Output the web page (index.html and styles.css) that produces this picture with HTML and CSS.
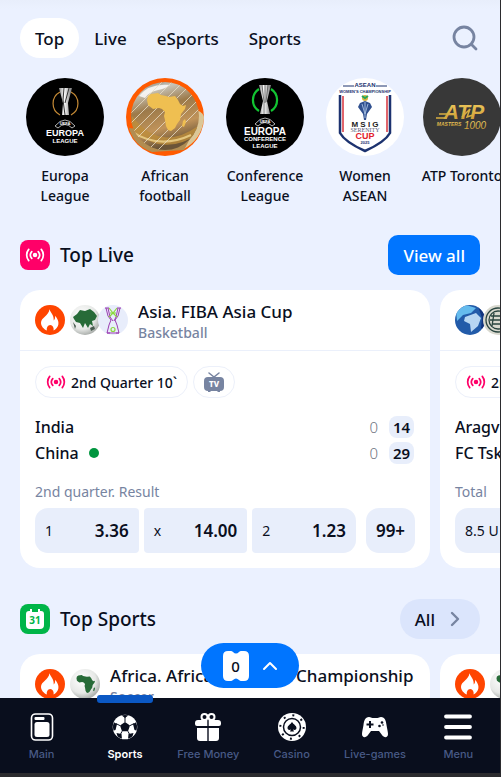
FILE: index.html
```html
<!DOCTYPE html>
<html lang="en">

<head>
  <meta charset="UTF-8" />
  <meta name="viewport" content="width=device-width, initial-scale=1" />
  <title>Sports</title>
  <link rel="stylesheet" href="styles.css">
</head>

<body>
  <!-- shared icons -->
  <svg class="sprite" aria-hidden="true">
    <symbol id="live" viewBox="0 0 22 20">
      <circle cx="11" cy="10" r="2.5" fill="currentColor" />
      <g fill="none" stroke="currentColor" stroke-width="1.9" stroke-linecap="round">
        <path d="M7.4 6.2c-1.9 2.2-1.9 5.4 0 7.6M14.6 6.2c1.9 2.2 1.9 5.4 0 7.6" />
        <path d="M4 3.8c-3 3.6-3 8.8 0 12.4M18 3.8c3 3.6 3 8.8 0 12.4" />
      </g>
    </symbol>
    <symbol id="flame" viewBox="0 0 30 30">
      <circle cx="15" cy="15" r="15" fill="#ff4500" />
      <path fill="#fff" d="M14.4 4.2C16 8 19.2 10.6 18.7 15.6C20 14.5 20.3 12.500 20 10.800C22.500 13.500 23.800 16.500 23.400 19.200C23 22 20.800 24.400 18.600 25.600C19 22.500 17.800 20.200 15.200 20C12.600 20.200 11.400 22.500 11.800 25.600C8.700 24.200 6 21.200 6 17.800C6 12.500 14 10.500 14.400 4.200Z" />
    </symbol>
    <symbol id="africa" viewBox="20 13 42 42">
      <path fill="currentColor" d="M22 18l3-2 7-1 3 2 5 1 3 1 6-1 3 4 2 4 3 2 3-1-1 4-4 5-1 6-3 4-2 4-4 3-3-1-2-4-1-6-1-4 1-4-3-3-3-1-6 1-5-4-1-5zM57 43l2-2 1 3-2 5-2-1z" />
    </symbol>
    <symbol id="africa-globe" viewBox="0 0 30 30">
      <circle cx="15" cy="15" r="15" fill="url(#globe)" />
      <use href="#africa" x="6" y="5" width="20" height="20" color="#276b38" />
    </symbol>
    <defs>
      <radialGradient id="globe" cx=".4" cy=".35" r=".65">
        <stop offset="0" stop-color="#fff" />
        <stop offset=".7" stop-color="#e6e8e6" />
        <stop offset="1" stop-color="#aeb2af" />
      </radialGradient>
      <linearGradient id="gold" x2="0" y2="1">
        <stop offset="0" stop-color="#f3cf62" />
        <stop offset="1" stop-color="#c79630" />
      </linearGradient>
      <linearGradient id="glass" x2=".3" y2="1">
        <stop offset="0" stop-color="#77736a" />
        <stop offset=".2" stop-color="#c8c4b8" />
        <stop offset=".45" stop-color="#9c7a4a" />
        <stop offset=".75" stop-color="#c0935a" />
        <stop offset="1" stop-color="#6b5538" />
      </linearGradient>
      <linearGradient id="silver">
        <stop offset="0" stop-color="#8a8a8a" />
        <stop offset=".4" stop-color="#fff" />
        <stop offset="1" stop-color="#777" />
      </linearGradient>
      <clipPath id="ball"><circle cx="39" cy="38" r="34" /></clipPath>
      <clipPath id="disc"><circle cx="15" cy="15" r="15" /></clipPath>
      <clipPath id="soccer"><circle cx="14" cy="14" r="12" /></clipPath>
    </defs>
  </svg>

  <div class="app">
    <main class="content">
      <nav class="tabs" aria-label="Sections">
        <button class="tab active">Top</button>
        <button class="tab">Live</button>
        <button class="tab">eSports</button>
        <button class="tab">Sports</button>
        <button class="search" aria-label="Search">
          <svg viewBox="0 0 28 26" width="28" height="26">
            <g fill="none" stroke="#7784a1" stroke-width="2.800" stroke-linecap="round">
              <circle cx="12" cy="12" r="10" />
              <path d="M19.500 19.500l4.500 4.500" />
            </g>
          </svg>
        </button>
      </nav>

      <div class="leagues">
        <a class="league" href="#">
          <svg viewBox="0 0 78 78">
            <circle cx="39" cy="39" r="39" fill="#000" />
            <path d="M34 14a13 13 0 0 0 0 23M45 14a13 13 0 0 1 0 23" fill="none" stroke="#c58a35" stroke-width="1.200" />
            <path d="M33 10h13l-4 15 1 12h-7l1-12z" fill="url(#silver)" />
            <path d="M38 10l-1 12 2 15M43 10l-4 15" stroke="#333" fill="none" />
            <path d="M29 48q10-12 20 0l-3 2q-7-7-14 0z" fill="none" stroke="#ddd" stroke-width=".8" />
            <text x="39" y="47" class="logo-text" font-size="4">UEFA</text>
            <text x="39" y="58" class="logo-text" font-size="9">EUROPA</text>
            <text x="39" y="65" class="logo-text" font-size="6">LEAGUE</text>
          </svg>
          <span>Europa League</span>
        </a>
        <a class="league" href="#">
          <svg viewBox="0 0 78 78">
            <circle cx="39" cy="39" r="39" fill="#ff5a00" />
            <path d="M71 32q7 3 7 8-2 22-22 32l-9-3q20-10 24-37z" fill="#dbc797" />
            <path d="M3 50q5 18 23 24l32-2 8-15z" fill="#b28d51" />
            <circle cx="39" cy="38" r="34" fill="url(#glass)" />
            <g clip-path="url(#ball)">
              <path d="M6 38q28 37 66 10v8q-35 24-66-5z" fill="#bd8d3b" opacity=".8" />
              <path d="M5 53q28 19 60 4" fill="none" stroke="#e4c67d" stroke-width="2" />
              <path d="M13 18q10-13 31-11-5 4-12 5-9 2-13 8z" fill="#fff" opacity=".8" />
              <path d="M-8 48L43-3M-2 52L49 1M4 57L57 4M10 61L64 7M16 67L70 13M22 72L73 21M30 74L77 27" stroke="#e9ddc6" stroke-width=".8" />
            </g>
            <use href="#africa" x="20" y="13" width="42" height="42" color="#efbf51" />
          </svg>
          <span>African football</span>
        </a>
        <a class="league" href="#">
          <svg viewBox="0 0 78 78">
            <circle cx="39" cy="39" r="39" fill="#000" />
            <path d="M33 11a13 13 0 0 0 0 22M45 11a13 13 0 0 1 0 22" fill="none" stroke="#12c432" stroke-width="2.200" />
            <path d="M33 7h12l-4 16 3 13H34l3-13z" fill="url(#silver)" />
            <path d="M36 7l2 17v12M42 7l-2 17M39 7v18" stroke="#444" stroke-width=".7" fill="none" />
            <path d="M29 46q10-12 20 0l-3 2q-7-7-14 0z" fill="none" stroke="#ddd" stroke-width=".8" />
            <text x="39" y="45" class="logo-text" font-size="4">UEFA</text>
            <text x="39" y="57" class="logo-text" font-size="10">EUROPA</text>
            <text x="39" y="63" class="logo-text" font-size="6">CONFERENCE</text>
            <text x="39" y="70" class="logo-text" font-size="6">LEAGUE</text>
          </svg>
          <span>Conference League</span>
        </a>
        <a class="league" href="#">
          <svg viewBox="0 0 78 78">
            <circle cx="39" cy="39" r="39" fill="#fff" />
            <path d="M14 17v38q5 9 25 18 20-9 25-18V17" fill="none" stroke="#1c326f" stroke-width="2.500" />
            <path d="M17 18v36M61 18v36" stroke="#d8353d" stroke-width="1.500" />
            <path d="M17 8h11M50 8h11" stroke="#1c326f" />
            <text x="39" y="9" class="logo-text navy" font-size="6">ASEAN</text>
            <text x="39" y="15" class="logo-text navy" font-size="4">WOMEN'S CHAMPIONSHIP</text>
            <circle cx="39" cy="20" r="3" fill="#d8b442" />
            <path d="M36 18l3 2 3-2" stroke="#27a65a" stroke-width="2" fill="none" />
            <path d="M34 25l5-2 5 2 2 4-5 7-1 6h-2l-1-6-5-7z" fill="#30508f" />
            <path d="M36 26l3 10 3-10M39 24v16" stroke="#9db7dd" fill="none" />
            <text x="39" y="49" class="logo-text dark" font-size="8">M S I G</text>
            <text x="39" y="54" class="logo-serif" font-size="6">SERENITY</text>
            <text x="39" y="61" class="logo-text red" font-size="9">CUP</text>
            <text x="39" y="66" class="logo-text navy" font-size="4">2025</text>
          </svg>
          <span>Women ASEAN</span>
        </a>
        <a class="league league-wide" href="#">
          <svg viewBox="0 0 78 78">
            <circle cx="39" cy="39" r="39" fill="#383838" />
            <text x="41" y="41" class="logo-gold" font-size="21">ATP</text>
            <path d="M13 40h11M16 36h9M39 39l8-8-3 8 6-2" stroke="#d8ae42" stroke-width="1.500" fill="none" />
            <text x="26" y="48" class="logo-gold" font-size="5">MASTERS</text>
            <text x="52" y="51" class="logo-gold thin" font-size="10">1000</text>
          </svg>
          <span>ATP Toronto</span>
        </a>
      </div>

      <section class="section">
        <header class="section-header">
          <span class="section-icon pink"><svg viewBox="0 0 22 20" width="20" height="18"><use href="#live" /></svg></span>
          <h2>Top Live</h2>
          <button class="view-all">View all</button>
        </header>

        <div class="cards">
          <article class="card">
            <div class="card-header">
              <div class="badges">
                <svg viewBox="0 0 30 30"><use href="#flame" /></svg>
                <svg viewBox="0 0 30 30">
                  <circle cx="15" cy="15" r="15" fill="url(#globe)" />
                  <path fill="#276b38" d="M3 12l4-3 3-4 5 1 5-2 4 3 3 4-2 4-3 1 1 5-3-2-2 4-3-5-2 5-3-5-4-1-2-3z" />
                  <path fill="#4a5c51" d="M20 23l4-2 1 3-4 2zM3 17l3 4-1 3z" />
                </svg>
                <svg class="overlap" viewBox="0 0 30 30">
                  <circle cx="15" cy="15" r="15" fill="#e8edfb" />
                  <g fill="none" stroke="#9b3db1">
                    <path d="M7 3h4M19 3h4M8 3l2 8 3 4-2 5-2 8h3M22 3l-2 8-3 4 2 5 2 8h-3M10 3l2 9 3 4M20 3l-2 9-2 4M9 28h12" />
                  </g>
                  <g fill="none" stroke="#8cd83e" stroke-width="1.200">
                    <path d="M11 3l4 5 4-5M11 12l4-4 4 4M12 8h6" />
                    <circle cx="15" cy="24.500" r="2" />
                  </g>
                </svg>
              </div>
              <div class="titles">
                <h3>Asia. FIBA Asia Cup</h3>
                <p>Basketball</p>
              </div>
            </div>
            <div class="card-body">
              <div class="tags">
                <span class="tag live-tag"><svg viewBox="0 0 22 20" width="20" height="18"><use href="#live" /></svg>2nd Quarter 10`</span>
                <span class="tag">
                  <svg viewBox="0 0 20 20" width="20" height="20">
                    <path d="M5 1l5 4 5-4" fill="none" stroke="#7784a1" stroke-width="1.500" stroke-linecap="round" />
                    <rect y="5" width="20" height="14" rx="4" fill="#7784a1" />
                    <path d="M4 19h2.500v1H4zM13.500 19H16v1h-2.500z" fill="#7784a1" />
                    <text x="10" y="15" class="tv-text">TV</text>
                  </svg>
                </span>
              </div>
              <div class="teams">
                <div class="team"><span class="name">India</span><span class="sets">0</span><span class="score"><b>14</b></span></div>
                <div class="team"><span class="name serving">China</span><span class="sets">0</span><span class="score"><b>29</b></span></div>
              </div>
              <p class="market">2nd quarter. Result</p>
              <div class="odds">
                <div class="outcomes">
                  <button class="odd"><span>1</span><b>3.36</b></button>
                  <button class="odd"><span>x</span><b>14.00</b></button>
                  <button class="odd"><span>2</span><b>1.23</b></button>
                </div>
                <button class="more">99+</button>
              </div>
            </div>
          </article>

          <article class="card">
            <div class="card-header">
              <div class="badges">
                <svg viewBox="0 0 30 30">
                  <circle cx="15" cy="15" r="15" fill="#225ba9" />
                  <g clip-path="url(#disc)">
                    <path d="M1 6l10-6 10 3-5 5-8 2-6 6z" fill="#65bbed" />
                    <path d="M10 12l11-4 5 5-3 8-7 6-1-8-6-3z" fill="#b7d6f2" />
                    <path d="M23 1l7 5v19l-4-2 1-10z" fill="#12347d" />
                  </g>
                </svg>
                <svg class="overlap" viewBox="0 0 30 30">
                  <circle cx="15" cy="15" r="15" fill="#d9d9cf" />
                  <g fill="none" stroke="#29443f" stroke-width="1.300">
                    <circle cx="15" cy="15" r="12" />
                    <circle cx="15" cy="15" r="9" />
                    <path d="M8 11h14M7 15h15M9 19h12M11 8l-2 13" />
                  </g>
                </svg>
              </div>
            </div>
            <div class="card-body">
              <div class="tags">
                <span class="tag live-tag"><svg viewBox="0 0 22 20" width="20" height="18"><use href="#live" /></svg>2nd half</span>
              </div>
              <div class="teams">
                <div class="team"><span class="name">Aragvi</span></div>
                <div class="team"><span class="name">FC Tskhinvali</span></div>
              </div>
              <p class="market">Total</p>
              <div class="odds">
                <div class="outcomes single">
                  <button class="odd"><span>8.5 U</span></button>
                </div>
              </div>
            </div>
          </article>
        </div>
      </section>

      <section class="section">
        <header class="section-header">
          <span class="section-icon green">
            <svg viewBox="0 0 20 20" width="20" height="20">
              <path d="M4 2h1V0h2v3h6V0h2v2h1q3 0 3 3v11q0 4-4 4H5q-4 0-4-4V5q0-3 3-3z" fill="#fff" />
              <text x="10" y="15" class="cal-text">31</text>
            </svg>
          </span>
          <h2>Top Sports</h2>
          <button class="all">All
            <svg viewBox="0 0 10 16" width="10" height="16"><path d="M2 2l6 6-6 6" fill="none" stroke="#7784a1" stroke-width="2.400" stroke-linecap="round" stroke-linejoin="round" /></svg>
          </button>
        </header>

        <div class="cards">
          <article class="card">
            <div class="card-header">
              <div class="badges">
                <svg viewBox="0 0 30 30"><use href="#flame" /></svg>
                <svg viewBox="0 0 30 30"><use href="#africa-globe" /></svg>
              </div>
              <div class="titles">
                <h3>Africa. African Nations Championship</h3>
                <p>Soccer</p>
              </div>
            </div>
          </article>
          <article class="card">
            <div class="card-header">
              <div class="badges">
                <svg viewBox="0 0 30 30"><use href="#flame" /></svg>
                <svg viewBox="0 0 30 30"><use href="#africa-globe" /></svg>
              </div>
            </div>
          </article>
        </div>
      </section>
    </main>

    <button class="coupon" aria-label="Bet slip">
      <span class="ticket">
        <svg viewBox="0 0 26 30" width="26" height="30"><path d="M5 0h3q1 0 2 1 3 3 6 0 1-1 2-1h3q5 0 5 5v20q0 5-5 5h-3q-1 0-2-1-3-3-6 0-1 1-2 1H5q-5 0-5-5V5q0-5 5-5z" fill="#fff" /></svg>
        <span class="count">0</span>
      </span>
      <svg viewBox="0 0 16 10" width="16" height="10"><path d="M2 8l6-6 6 6" fill="none" stroke="#fff" stroke-width="2" stroke-linecap="round" stroke-linejoin="round" /></svg>
    </button>

    <nav class="bottom-nav" aria-label="Main menu">
      <a href="#">
        <svg viewBox="0 0 28 28">
          <rect x="3.500" y="1" width="21" height="26" rx="4" fill="none" stroke="#fff" stroke-width="1.600" />
          <rect x="6.500" y="4" width="10" height="3" rx="1" fill="#fff" />
          <rect x="6.500" y="9" width="15" height="15" rx="2.500" fill="#fff" />
        </svg>
        Main
      </a>
      <a href="#" class="active">
        <svg viewBox="0 0 28 28">
          <circle cx="14" cy="14" r="12.300" fill="#fff" />
          <g clip-path="url(#soccer)">
            <path fill="#090e1d" d="M14 9l5 3.600-2 5.700h-6l-2-5.700zM9.500 1.500h9L14 5zM1.500 8.500l4.500 2.500-1.500 6-3 1zM26.500 8.500L22 11l1.500 6 3 1zM5.500 20l5 1 .5 5-4-1zM22.500 20l-5 1-.5 5 4-1z" />
            <path d="M14 9V4M19 12.600l4-2M17 18.300l2 4M11 18.300l-2 4M9 12.600l-4-2" stroke="#090e1d" />
          </g>
        </svg>
        Sports
      </a>
      <a href="#">
        <svg viewBox="0 0 28 28">
          <g fill="none" stroke="#fff" stroke-width="2"><circle cx="10.500" cy="4" r="3" /><circle cx="17.500" cy="4" r="3" /></g>
          <path fill="#fff" d="M4 7h9.300v6H3q-2 0-2-2v-1q0-3 3-3zM14.700 7H24q3 0 3 3v1q0 2-2 2H14.700zM3 15h10.300v13H6q-3 0-3-3zM14.700 15H25v10q0 3-3 3h-7.300z" />
        </svg>
        Free Money
      </a>
      <a href="#">
        <svg viewBox="0 0 28 28">
          <circle cx="14" cy="14" r="14" fill="#fff" />
          <circle cx="14" cy="14" r="11.700" fill="none" stroke="#090e1d" stroke-width="2" stroke-dasharray="2 7.190" />
          <circle cx="14" cy="14" r="8.500" fill="none" stroke="#090e1d" stroke-width="1.500" />
          <path fill="#090e1d" d="M14 9c1.500 2.500 4.500 3.500 4.500 6 0 2-2.500 2.500-3.500 1.300l1 2.200h-4l1-2.200c-1 1.200-3.500.7-3.500-1.300 0-2.500 3-3.500 4.500-6z" />
        </svg>
        Casino
      </a>
      <a href="#">
        <svg viewBox="0 0 28 28">
          <path fill="#fff" d="M8 4c2 0 2 1 3.500 1h5C18 5 18 4 20 4c4 0 5 4 5.500 8 .5 3 1.500 7 1.500 9 0 4-4 4-6 1l-3-4h-8l-3 4c-2 3-6 3-6-1 0-2 1-6 1.500-9C3 8 4 4 8 4z" />
          <path d="M5.500 11.500h7M9 8v7" stroke="#090e1d" stroke-width="2" />
          <g fill="#090e1d"><circle cx="21" cy="9.500" r="1.300" /><circle cx="18.500" cy="13" r="1.300" /><circle cx="22" cy="12" r=".8" /></g>
        </svg>
        Live-games
      </a>
      <a href="#">
        <svg viewBox="0 0 28 28"><path d="M2 3.500h24M2 14h24M2 24.500h24" stroke="#fff" stroke-width="3.800" stroke-linecap="round" /></svg>
        Menu
      </a>
    </nav>
  </div>
</body>

</html>
```

FILE: styles.css
```css
* {
  box-sizing: border-box;
}

body {
  margin: 0;
  font-family: 'Noto Sans', sans-serif;
  font-weight: 500;
  color: #0a0f1e;
  background: #ebf1ff;
}

h2,
h3,
p {
  margin: 0;
}

button {
  font: inherit;
  color: inherit;
  border: none;
  padding: 0;
  cursor: pointer;
}

a {
  color: inherit;
  text-decoration: none;
}

svg {
  display: block;
  flex-shrink: 0;
}

.sprite {
  position: absolute;
  width: 0;
  height: 0;
}

.app {
  position: relative;
  display: flex;
  flex-direction: column;
  height: 100vh;
  border-right: 1px solid #2b2b2e;
  border-bottom: 4px solid #2b2b2e;
}

.content {
  flex: 1;
  min-height: 0;
  overflow-x: hidden;
  overflow-y: auto;
  scrollbar-width: none;
  padding: 18px 20px 0;
  background: linear-gradient(#e8eefb, #ebf1ff 9px);
}

/* tabs */
.tabs {
  display: flex;
  align-items: center;
  height: 40px;
  margin-bottom: 20px;
}

.tab {
  height: 40px;
  padding: 0 15px;
  border-radius: 20px;
  background: none;
  font-size: 17px;
}

.tab.active {
  background: #fff;
}

.search {
  margin-left: auto;
  background: none;
}

/* leagues */
.leagues {
  display: flex;
  gap: 10px;
  margin-bottom: 29px;
}

.league {
  flex: none;
  display: flex;
  flex-direction: column;
  align-items: center;
  gap: 10px;
  width: 90px;
  font-size: 14px;
  line-height: 20px;
  text-align: center;
}

.league svg {
  width: 78px;
  height: 78px;
}

.league-wide {
  width: auto;
  min-width: 84px;
  white-space: nowrap;
}

.logo-text {
  font-family: 'Liberation Sans', sans-serif;
  font-weight: 700;
  text-anchor: middle;
  fill: #fff;
}

.logo-text.navy {
  fill: #1c326f;
}

.logo-text.dark {
  fill: #222;
}

.logo-text.red {
  fill: #e3202c;
}

.logo-serif {
  font-family: 'Liberation Serif', serif;
  text-anchor: middle;
  fill: #555a7a;
}

.logo-gold {
  font-family: 'Liberation Sans', sans-serif;
  font-weight: 700;
  font-style: italic;
  text-anchor: middle;
  fill: url(#gold);
}

.logo-gold.thin {
  font-weight: 400;
}

/* sections */
.section {
  margin-bottom: 31px;
}

.section-header {
  display: flex;
  align-items: center;
  gap: 10px;
  height: 40px;
  margin-bottom: 15px;
}

.section-header h2 {
  flex: 1;
  font-size: 19px;
  font-weight: 500;
}

.section-icon {
  display: flex;
  align-items: center;
  justify-content: center;
  width: 30px;
  height: 30px;
  border-radius: 8px;
  color: #fff;
}

.section-icon.pink {
  background: #ff0068;
}

.section-icon.green {
  background: #00b548;
}

.cal-text {
  font-family: 'Noto Sans', sans-serif;
  font-size: 10px;
  font-weight: 700;
  text-anchor: middle;
  fill: #00b548;
}

.view-all {
  height: 40px;
  padding: 0 15px;
  border-radius: 10px;
  background: #0075ff;
  color: #fff;
  font-size: 17px;
}

.all {
  display: flex;
  align-items: center;
  gap: 15px;
  height: 40px;
  padding: 0 20px 0 15px;
  border-radius: 20px;
  background: #dbe5fc;
  font-size: 17px;
}

/* cards */
.cards {
  display: flex;
  gap: 10px;
}

.card {
  flex: none;
  width: calc(100% - 50px);
  border-radius: 20px;
  background: #fff;
}

.card-header {
  display: flex;
  align-items: center;
  gap: 10px;
  height: 61px;
  padding: 0 15px;
  border-bottom: 1px solid #ebf0fb;
}

.badges {
  display: flex;
  gap: 5px;
}

.badges svg {
  width: 30px;
  height: 30px;
}

.badges .overlap {
  margin-left: -7px;
}

.titles {
  padding-top: 3px;
}

.titles h3 {
  font-size: 17px;
  line-height: 22px;
  font-weight: 500;
  white-space: nowrap;
}

.titles p {
  font-size: 14px;
  line-height: 20px;
  color: #7784a1;
}

.card-body {
  padding: 15px;
}

.tags {
  display: flex;
  gap: 5px;
  margin-bottom: 16px;
}

.tag {
  display: flex;
  align-items: center;
  gap: 5px;
  height: 32px;
  padding: 0 10px;
  border: 1px solid #ecf0fa;
  border-radius: 16px;
  font-size: 14px;
  white-space: nowrap;
}

.live-tag svg {
  color: #ff0068;
}

.tv-text {
  font-family: 'Noto Sans', sans-serif;
  font-size: 8px;
  font-weight: 800;
  text-anchor: middle;
  fill: #fff;
}

.teams {
  margin-bottom: 16px;
}

.team {
  display: flex;
  align-items: center;
  height: 26px;
  font-size: 16px;
}

.name {
  flex: 1;
  display: flex;
  align-items: center;
  gap: 10px;
  white-space: nowrap;
}

.serving::after {
  content: '';
  width: 10px;
  height: 10px;
  border-radius: 50%;
  background: #00963f;
}

.sets {
  margin-right: 10px;
  font-size: 15px;
  font-weight: 300;
  color: #70747f;
}

.score {
  display: flex;
  justify-content: center;
  width: 27px;
}

.score b {
  padding: 0 4px;
  border-radius: 8px;
  background: #e8eefb;
  font-size: 15px;
  line-height: 22px;
  font-weight: 600;
}

.market {
  margin-bottom: 6px;
  font-size: 14px;
  line-height: 20px;
  font-weight: 400;
  color: #7784a1;
}

.odds {
  display: flex;
  gap: 10px;
}

.outcomes {
  flex: 1;
  display: grid;
  grid-template-columns: repeat(3, 1fr);
  gap: 5px;
  border-radius: 13px;
  overflow: hidden;
}

.outcomes.single {
  grid-template-columns: 1fr;
}

.odd {
  display: flex;
  align-items: center;
  justify-content: space-between;
  height: 45px;
  padding: 0 10px;
  border-radius: 4px;
  background: #e8eefb;
  font-size: 14px;
  font-weight: 400;
}

.odd b {
  font-size: 17px;
  font-weight: 600;
}

.more {
  width: 49px;
  border-radius: 13px;
  background: #e8eefb;
  font-size: 17px;
  font-weight: 600;
}

/* bet slip */
.coupon {
  position: absolute;
  left: 50%;
  bottom: 85px;
  transform: translateX(-50%);
  display: flex;
  align-items: center;
  justify-content: center;
  gap: 13px;
  width: 98px;
  height: 45px;
  border-radius: 23px;
  background: #0075ff;
}

.ticket {
  display: grid;
  place-items: center;
  color: #0a0f1e;
  font-size: 15px;
}

.ticket > * {
  grid-area: 1 / 1;
}

/* bottom navigation */
.bottom-nav {
  display: grid;
  grid-template-columns: repeat(6, 1fr);
  height: 75px;
  background: #090e1d;
}

.bottom-nav a {
  position: relative;
  display: flex;
  flex-direction: column;
  align-items: center;
  gap: 5px;
  padding-top: 15px;
  color: #485a86;
  font-family: Inter, sans-serif;
  font-size: 11px;
  line-height: 16px;
  white-space: nowrap;
}

.bottom-nav svg {
  width: 28px;
  height: 28px;
}

.bottom-nav a.active {
  color: #fff;
  font-weight: 600;
}

.bottom-nav a.active::before {
  content: '';
  position: absolute;
  top: -3px;
  width: 56px;
  height: 8px;
  border-radius: 3px;
  background: #0b58c4;
}
```
